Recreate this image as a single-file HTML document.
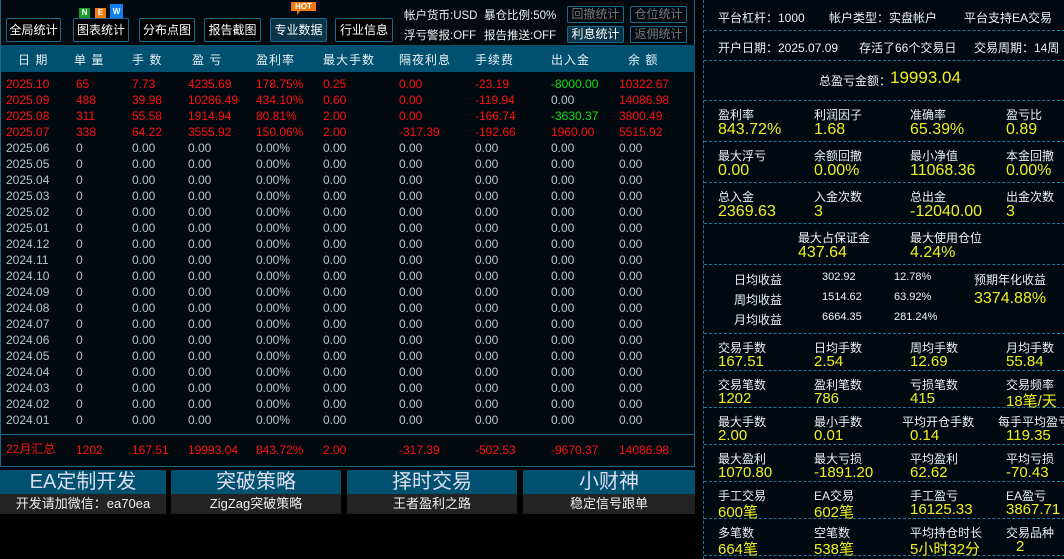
<!DOCTYPE html>
<html><head><meta charset="utf-8"><style>
*{margin:0;padding:0;box-sizing:border-box}
body{width:1064px;height:559px;background:#000;position:relative;overflow:hidden;font-family:"Liberation Sans","Noto Sans CJK SC",sans-serif;font-size:12px;color:#e8e8e8}
.a{position:absolute;white-space:nowrap}
#lp{position:absolute;left:0;top:0;width:695px;height:467px;background:#020a10;border:1px solid #1a6a8a;border-top:none}
.btn{position:absolute;top:18px;height:24px;border:1px solid #1a6a8a;border-radius:2px;background:#000;color:#fff;font-size:12px;line-height:22px;text-align:center}
.sb{position:absolute;height:17px;border:1px solid #1a6a8a;border-radius:2px;color:#777;font-size:12px;line-height:15px;text-align:center;width:57px}
#hd{position:absolute;left:0;top:45px;width:694px;height:27px;background:#005070}
#hd span,.r span{position:absolute;white-space:nowrap}
#hd span{top:6px;color:#e8f0f4;letter-spacing:1px}
.r{position:absolute;left:0;width:694px;height:16px;color:#b8c4cc;font-size:12px;line-height:16px}
.red{color:#ff1010}
.g{color:#10e010}
.c0{left:5px}.c1{left:75px}.c2{left:131px}.c3{left:187px}.c4{left:255px}.c5{left:322px}.c6{left:398px}.c7{left:474px}.c8{left:550px}.c9{left:618px}
.bb{position:absolute;top:470px;height:44px}
.bb .t{height:24px;background:#005070;color:#dde;font-size:20px;line-height:24px;text-align:center}
.bb .b{height:20px;background:#232323;color:#eee;font-size:13px;line-height:20px;text-align:center}
#rp{position:absolute;left:703px;top:0;width:361px;height:559px;border-left:1px dashed #1a7a9a;background:#000810}
.sec{position:absolute;left:0;width:361px;border-bottom:1px dashed #1a7a9a}
.l{position:absolute;font-size:12px;color:#f0f0f0;white-space:nowrap}
.v{position:absolute;font-size:16px;color:#f0f020;white-space:nowrap}
.s .v{top:19px !important;font-size:15px !important}
</style></head><body>
<div id="lp">
<div class="btn" style="left:5px;width:55px">全局统计</div>
<div class="btn" style="left:72px;width:56px">图表统计</div>
<div class="btn" style="left:138px;width:56px">分布点图</div>
<div class="btn" style="left:203px;width:57px">报告截图</div>
<div class="btn" style="left:269px;width:57px;background:#0a3448">专业数据</div>
<div class="btn" style="left:334px;width:58px">行业信息</div>
<div class="a" style="left:78px;top:8px;width:11px;height:10px;background:#1a9a2a;color:#fff;font-size:8px;font-weight:bold;text-align:center;line-height:10px">N</div>
<div class="a" style="left:94px;top:8px;width:11px;height:10px;background:#f07a10;color:#fff;font-size:8px;font-weight:bold;text-align:center;line-height:10px">E</div>
<div class="a" style="left:109px;top:4px;width:13px;height:14px;background:#1080f0;color:#fff;font-size:8px;font-weight:bold;text-align:center;line-height:16px">W</div>
<div class="a" style="left:290px;top:2px;width:25px;height:9px;background:#f07a10;color:#fff;font-size:8px;font-weight:bold;text-align:center;line-height:9px">HOT</div>
<div class="a" style="left:296px;top:11px;width:0;height:0;border-left:3px solid #f07a10;border-bottom:4px solid transparent"></div>
<div class="a" style="left:403px;top:7px;color:#f0f0f0;font-size:11.5px">帐户货币:USD</div>
<div class="a" style="left:483px;top:7px;color:#f0f0f0;font-size:11.5px">暴仓比例:50%</div>
<div class="a" style="left:403px;top:27px;color:#f0f0f0;font-size:11.5px">浮亏警报:OFF</div>
<div class="a" style="left:483px;top:27px;color:#f0f0f0;font-size:11.5px">报告推送:OFF</div>
<div class="sb" style="left:566px;top:6px">回撤统计</div>
<div class="sb" style="left:629px;top:6px">仓位统计</div>
<div class="sb" style="left:566px;top:26px;background:#0a3448;color:#fff">利息统计</div>
<div class="sb" style="left:629px;top:26px">返佣统计</div>
<div id="hd"><span style="left:17px">日 期</span><span style="left:73px">单 量</span><span style="left:131px">手 数</span><span style="left:191px">盈 亏</span><span style="left:255px">盈利率</span><span style="left:322px">最大手数</span><span style="left:398px">隔夜利息</span><span style="left:474px">手续费</span><span style="left:550px">出入金</span><span style="left:627px">余 额</span></div>
<div class="r red" style="top:76px"><span class="c0">2025.10</span><span class="c1">65</span><span class="c2">7.73</span><span class="c3">4235.69</span><span class="c4">178.75%</span><span class="c5">0.25</span><span class="c6">0.00</span><span class="c7">-23.19</span><span class="c8 g">-8000.00</span><span class="c9">10322.67</span></div>
<div class="r red" style="top:92px"><span class="c0">2025.09</span><span class="c1">488</span><span class="c2">39.98</span><span class="c3">10286.49</span><span class="c4">434.10%</span><span class="c5">0.60</span><span class="c6">0.00</span><span class="c7">-119.94</span><span class="c8" style="color:#b8c4cc">0.00</span><span class="c9">14086.98</span></div>
<div class="r red" style="top:108px"><span class="c0">2025.08</span><span class="c1">311</span><span class="c2">55.58</span><span class="c3">1914.94</span><span class="c4">80.81%</span><span class="c5">2.00</span><span class="c6">0.00</span><span class="c7">-166.74</span><span class="c8 g">-3630.37</span><span class="c9">3800.49</span></div>
<div class="r red" style="top:124px"><span class="c0">2025.07</span><span class="c1">338</span><span class="c2">64.22</span><span class="c3">3555.92</span><span class="c4">150.06%</span><span class="c5">2.00</span><span class="c6">-317.39</span><span class="c7">-192.66</span><span class="c8">1960.00</span><span class="c9">5515.92</span></div>
<div class="r" style="top:140px"><span class="c0">2025.06</span><span class="c1">0</span><span class="c2">0.00</span><span class="c3">0.00</span><span class="c4">0.00%</span><span class="c5">0.00</span><span class="c6">0.00</span><span class="c7">0.00</span><span class="c8">0.00</span><span class="c9">0.00</span></div>
<div class="r" style="top:156px"><span class="c0">2025.05</span><span class="c1">0</span><span class="c2">0.00</span><span class="c3">0.00</span><span class="c4">0.00%</span><span class="c5">0.00</span><span class="c6">0.00</span><span class="c7">0.00</span><span class="c8">0.00</span><span class="c9">0.00</span></div>
<div class="r" style="top:172px"><span class="c0">2025.04</span><span class="c1">0</span><span class="c2">0.00</span><span class="c3">0.00</span><span class="c4">0.00%</span><span class="c5">0.00</span><span class="c6">0.00</span><span class="c7">0.00</span><span class="c8">0.00</span><span class="c9">0.00</span></div>
<div class="r" style="top:188px"><span class="c0">2025.03</span><span class="c1">0</span><span class="c2">0.00</span><span class="c3">0.00</span><span class="c4">0.00%</span><span class="c5">0.00</span><span class="c6">0.00</span><span class="c7">0.00</span><span class="c8">0.00</span><span class="c9">0.00</span></div>
<div class="r" style="top:204px"><span class="c0">2025.02</span><span class="c1">0</span><span class="c2">0.00</span><span class="c3">0.00</span><span class="c4">0.00%</span><span class="c5">0.00</span><span class="c6">0.00</span><span class="c7">0.00</span><span class="c8">0.00</span><span class="c9">0.00</span></div>
<div class="r" style="top:220px"><span class="c0">2025.01</span><span class="c1">0</span><span class="c2">0.00</span><span class="c3">0.00</span><span class="c4">0.00%</span><span class="c5">0.00</span><span class="c6">0.00</span><span class="c7">0.00</span><span class="c8">0.00</span><span class="c9">0.00</span></div>
<div class="r" style="top:236px"><span class="c0">2024.12</span><span class="c1">0</span><span class="c2">0.00</span><span class="c3">0.00</span><span class="c4">0.00%</span><span class="c5">0.00</span><span class="c6">0.00</span><span class="c7">0.00</span><span class="c8">0.00</span><span class="c9">0.00</span></div>
<div class="r" style="top:252px"><span class="c0">2024.11</span><span class="c1">0</span><span class="c2">0.00</span><span class="c3">0.00</span><span class="c4">0.00%</span><span class="c5">0.00</span><span class="c6">0.00</span><span class="c7">0.00</span><span class="c8">0.00</span><span class="c9">0.00</span></div>
<div class="r" style="top:268px"><span class="c0">2024.10</span><span class="c1">0</span><span class="c2">0.00</span><span class="c3">0.00</span><span class="c4">0.00%</span><span class="c5">0.00</span><span class="c6">0.00</span><span class="c7">0.00</span><span class="c8">0.00</span><span class="c9">0.00</span></div>
<div class="r" style="top:284px"><span class="c0">2024.09</span><span class="c1">0</span><span class="c2">0.00</span><span class="c3">0.00</span><span class="c4">0.00%</span><span class="c5">0.00</span><span class="c6">0.00</span><span class="c7">0.00</span><span class="c8">0.00</span><span class="c9">0.00</span></div>
<div class="r" style="top:300px"><span class="c0">2024.08</span><span class="c1">0</span><span class="c2">0.00</span><span class="c3">0.00</span><span class="c4">0.00%</span><span class="c5">0.00</span><span class="c6">0.00</span><span class="c7">0.00</span><span class="c8">0.00</span><span class="c9">0.00</span></div>
<div class="r" style="top:316px"><span class="c0">2024.07</span><span class="c1">0</span><span class="c2">0.00</span><span class="c3">0.00</span><span class="c4">0.00%</span><span class="c5">0.00</span><span class="c6">0.00</span><span class="c7">0.00</span><span class="c8">0.00</span><span class="c9">0.00</span></div>
<div class="r" style="top:332px"><span class="c0">2024.06</span><span class="c1">0</span><span class="c2">0.00</span><span class="c3">0.00</span><span class="c4">0.00%</span><span class="c5">0.00</span><span class="c6">0.00</span><span class="c7">0.00</span><span class="c8">0.00</span><span class="c9">0.00</span></div>
<div class="r" style="top:348px"><span class="c0">2024.05</span><span class="c1">0</span><span class="c2">0.00</span><span class="c3">0.00</span><span class="c4">0.00%</span><span class="c5">0.00</span><span class="c6">0.00</span><span class="c7">0.00</span><span class="c8">0.00</span><span class="c9">0.00</span></div>
<div class="r" style="top:364px"><span class="c0">2024.04</span><span class="c1">0</span><span class="c2">0.00</span><span class="c3">0.00</span><span class="c4">0.00%</span><span class="c5">0.00</span><span class="c6">0.00</span><span class="c7">0.00</span><span class="c8">0.00</span><span class="c9">0.00</span></div>
<div class="r" style="top:380px"><span class="c0">2024.03</span><span class="c1">0</span><span class="c2">0.00</span><span class="c3">0.00</span><span class="c4">0.00%</span><span class="c5">0.00</span><span class="c6">0.00</span><span class="c7">0.00</span><span class="c8">0.00</span><span class="c9">0.00</span></div>
<div class="r" style="top:396px"><span class="c0">2024.02</span><span class="c1">0</span><span class="c2">0.00</span><span class="c3">0.00</span><span class="c4">0.00%</span><span class="c5">0.00</span><span class="c6">0.00</span><span class="c7">0.00</span><span class="c8">0.00</span><span class="c9">0.00</span></div>
<div class="r" style="top:412px"><span class="c0">2024.01</span><span class="c1">0</span><span class="c2">0.00</span><span class="c3">0.00</span><span class="c4">0.00%</span><span class="c5">0.00</span><span class="c6">0.00</span><span class="c7">0.00</span><span class="c8">0.00</span><span class="c9">0.00</span></div>
<div class="a" style="left:0;top:434px;width:694px;height:1px;background:#1a6a8a"></div>
<div class="r red" style="top:442px"><span class="c0" style="top:-1px">22月汇总</span><span class="c1">1202</span><span class="c2">167.51</span><span class="c3">19993.04</span><span class="c4">843.72%</span><span class="c5">2.00</span><span class="c6">-317.39</span><span class="c7">-502.53</span><span class="c8">-9670.37</span><span class="c9">14086.98</span></div>
</div>
<div class="bb" style="left:0;width:166px"><div class="t">EA定制开发</div><div class="b">开发请加微信：ea70ea</div></div>
<div class="bb" style="left:171px;width:170px"><div class="t">突破策略</div><div class="b">ZigZag突破策略</div></div>
<div class="bb" style="left:347px;width:170px"><div class="t">择时交易</div><div class="b">王者盈利之路</div></div>
<div class="bb" style="left:523px;width:172px"><div class="t">小财神</div><div class="b">稳定信号跟单</div></div>

<div id="rp">
<div class="sec" style="top:0;height:31px"><div class="l" style="left:14px;top:9px">平台杠杆：1000</div><div class="l" style="left:125px;top:9px">帐户类型：实盘帐户</div><div class="l" style="left:260px;top:9px">平台支持EA交易</div></div>
<div class="sec" style="top:31px;height:30px"><div class="l" style="left:14px;top:8px">开户日期：2025.07.09</div><div class="l" style="left:155px;top:8px">存活了66个交易日</div><div class="l" style="left:270px;top:8px">交易周期：14周</div></div>
<div class="sec" style="top:61px;height:40px"><div class="l" style="left:115px;top:11px">总盈亏金额：</div><div class="v" style="left:186px;top:7px;font-size:17px">19993.04</div></div>
<div class="sec" style="top:101px;height:41px"><div class="l" style="left:14px;top:5px">盈利率</div><div class="l" style="left:110px;top:5px">利润因子</div><div class="l" style="left:206px;top:5px">准确率</div><div class="l" style="left:302px;top:5px">盈亏比</div><div class="v" style="left:14px;top:20px">843.72%</div><div class="v" style="left:110px;top:20px">1.68</div><div class="v" style="left:206px;top:20px">65.39%</div><div class="v" style="left:302px;top:20px">0.89</div></div>
<div class="sec" style="top:142px;height:41px"><div class="l" style="left:14px;top:5px">最大浮亏</div><div class="l" style="left:110px;top:5px">余额回撤</div><div class="l" style="left:206px;top:5px">最小净值</div><div class="l" style="left:302px;top:5px">本金回撤</div><div class="v" style="left:14px;top:20px">0.00</div><div class="v" style="left:110px;top:20px">0.00%</div><div class="v" style="left:206px;top:20px">11068.36</div><div class="v" style="left:302px;top:20px">0.00%</div></div>
<div class="sec" style="top:183px;height:41px"><div class="l" style="left:14px;top:5px">总入金</div><div class="l" style="left:110px;top:5px">入金次数</div><div class="l" style="left:206px;top:5px">总出金</div><div class="l" style="left:302px;top:5px">出金次数</div><div class="v" style="left:14px;top:20px">2369.63</div><div class="v" style="left:110px;top:20px">3</div><div class="v" style="left:206px;top:20px">-12040.00</div><div class="v" style="left:302px;top:20px">3</div></div>
<div class="sec" style="top:224px;height:41px"><div class="l" style="left:94px;top:5px">最大占保证金</div><div class="l" style="left:206px;top:5px">最大使用仓位</div><div class="v" style="left:94px;top:20px">437.64</div><div class="v" style="left:206px;top:20px">4.24%</div></div>
<div class="sec" style="top:265px;height:69px">
<div class="l" style="left:30px;top:6px">日均收益</div><div class="l" style="left:118px;top:6px;font-size:11px">302.92</div><div class="l" style="left:190px;top:6px;font-size:11px">12.78%</div><div class="l" style="left:270px;top:6px">预期年化收益</div>
<div class="l" style="left:30px;top:26px">周均收益</div><div class="l" style="left:118px;top:26px;font-size:11px">1514.62</div><div class="l" style="left:190px;top:26px;font-size:11px">63.92%</div><div class="v" style="left:270px;top:25px">3374.88%</div>
<div class="l" style="left:30px;top:46px">月均收益</div><div class="l" style="left:118px;top:46px;font-size:11px">6664.35</div><div class="l" style="left:190px;top:46px;font-size:11px">281.24%</div></div>
<div class="sec s" style="top:334px;height:37px"><div class="l" style="left:14px;top:5px">交易手数</div><div class="l" style="left:110px;top:5px">日均手数</div><div class="l" style="left:206px;top:5px">周均手数</div><div class="l" style="left:302px;top:5px">月均手数</div><div class="v" style="left:14px">167.51</div><div class="v" style="left:110px">2.54</div><div class="v" style="left:206px">12.69</div><div class="v" style="left:302px">55.84</div></div>
<div class="sec s" style="top:371px;height:37px"><div class="l" style="left:14px;top:5px">交易笔数</div><div class="l" style="left:110px;top:5px">盈利笔数</div><div class="l" style="left:206px;top:5px">亏损笔数</div><div class="l" style="left:302px;top:5px">交易频率</div><div class="v" style="left:14px">1202</div><div class="v" style="left:110px">786</div><div class="v" style="left:206px">415</div><div class="v" style="left:302px">18笔/天</div></div>
<div class="sec s" style="top:408px;height:37px"><div class="l" style="left:14px;top:5px">最大手数</div><div class="l" style="left:110px;top:5px">最小手数</div><div class="l" style="left:198px;top:5px">平均开仓手数</div><div class="l" style="left:294px;top:5px">每手平均盈亏</div><div class="v" style="left:14px">2.00</div><div class="v" style="left:110px">0.01</div><div class="v" style="left:206px">0.14</div><div class="v" style="left:302px">119.35</div></div>
<div class="sec s" style="top:445px;height:37px"><div class="l" style="left:14px;top:5px">最大盈利</div><div class="l" style="left:110px;top:5px">最大亏损</div><div class="l" style="left:206px;top:5px">平均盈利</div><div class="l" style="left:302px;top:5px">平均亏损</div><div class="v" style="left:14px">1070.80</div><div class="v" style="left:110px">-1891.20</div><div class="v" style="left:206px">62.62</div><div class="v" style="left:302px">-70.43</div></div>
<div class="sec s" style="top:482px;height:37px"><div class="l" style="left:14px;top:5px">手工交易</div><div class="l" style="left:110px;top:5px">EA交易</div><div class="l" style="left:206px;top:5px">手工盈亏</div><div class="l" style="left:302px;top:5px">EA盈亏</div><div class="v" style="left:14px">600笔</div><div class="v" style="left:110px">602笔</div><div class="v" style="left:206px">16125.33</div><div class="v" style="left:302px">3867.71</div></div>
<div class="sec s" style="top:519px;height:37px"><div class="l" style="left:14px;top:5px">多笔数</div><div class="l" style="left:110px;top:5px">空笔数</div><div class="l" style="left:206px;top:5px">平均持仓时长</div><div class="l" style="left:302px;top:5px">交易品种</div><div class="v" style="left:14px">664笔</div><div class="v" style="left:110px">538笔</div><div class="v" style="left:206px">5小时32分</div><div class="v" style="left:312px">2</div></div>
</div>
</body></html>
